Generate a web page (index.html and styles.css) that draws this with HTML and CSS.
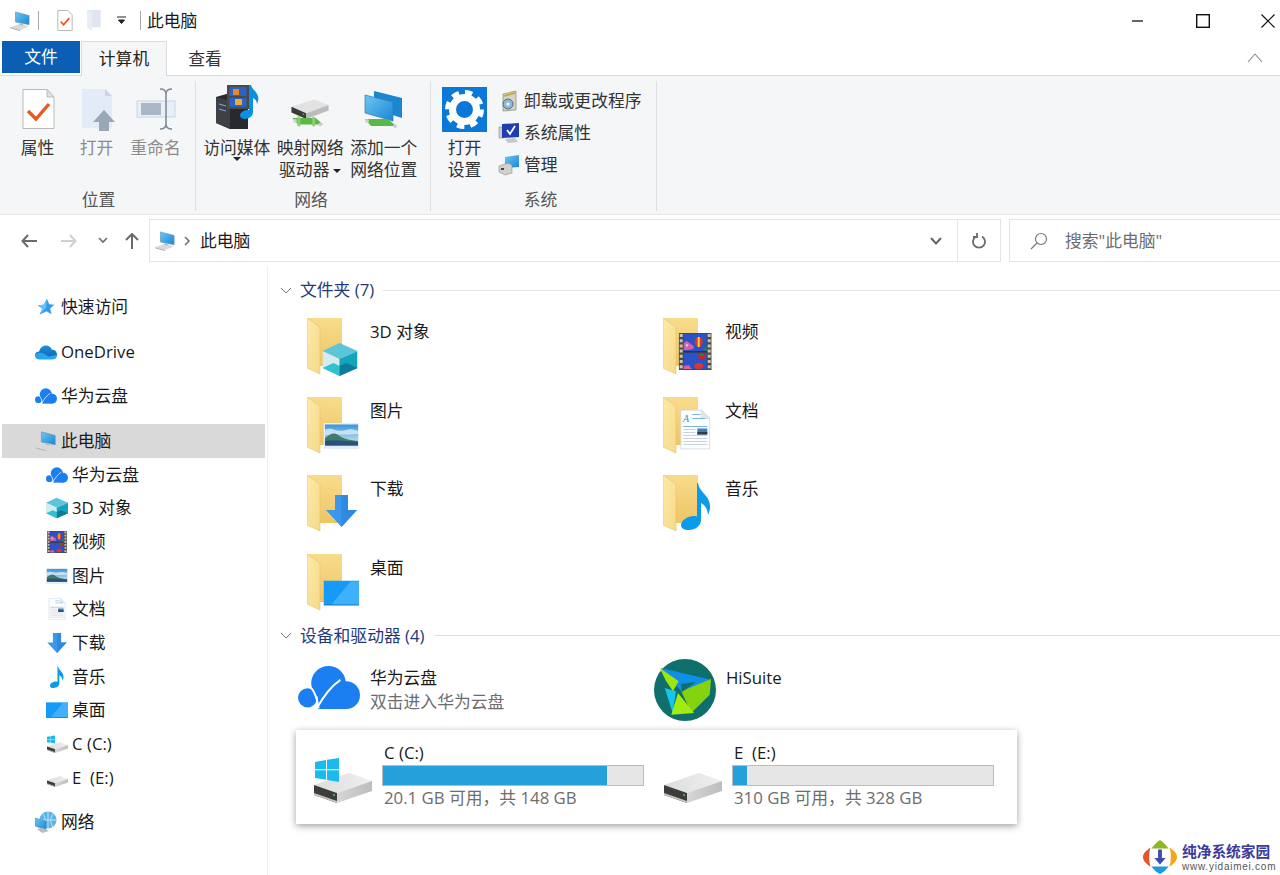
FILE: index.html
```html
<!DOCTYPE html>
<html lang="zh-CN">
<head>
<meta charset="utf-8">
<title>此电脑</title>
<link rel="stylesheet" href="styles.css">
</head>
<body>
<svg class="sprite" aria-hidden="true">
  <defs>
    <linearGradient id="gFolderBack" x1="0" y1="0" x2="0" y2="1"><stop offset="0" stop-color="#f8dc8c"/><stop offset="1" stop-color="#eec565"/></linearGradient>
    <linearGradient id="gFolderFlap" x1="0" y1="0" x2="1" y2="1"><stop offset="0" stop-color="#fdeaa8"/><stop offset="1" stop-color="#f7d98a"/></linearGradient>
    <linearGradient id="gScreen" x1="0" y1="0" x2="1" y2="1"><stop offset="0" stop-color="#6cc7f2"/><stop offset="1" stop-color="#1a86d6"/></linearGradient>
    <linearGradient id="gSky" x1="0" y1="0" x2="0" y2="1"><stop offset="0" stop-color="#3a95da"/><stop offset="1" stop-color="#d8ebf3"/></linearGradient>
    <linearGradient id="gDrive" x1="0" y1="0" x2="1" y2="0"><stop offset="0" stop-color="#dcdcdc"/><stop offset="1" stop-color="#f0f0f0"/></linearGradient>
    <linearGradient id="gDriveSide" x1="0" y1="0" x2="1" y2="0"><stop offset="0" stop-color="#d6d6d6"/><stop offset="1" stop-color="#bdbdbd"/></linearGradient>
    <linearGradient id="gOne" x1="0" y1="0" x2="0" y2="1"><stop offset="0" stop-color="#1f8fdc"/><stop offset="1" stop-color="#0a62b0"/></linearGradient>
  </defs>

  <symbol id="pc" viewBox="0 0 24 22">
    <polygon points="7,1 22,5 22,15 7,12" fill="url(#gScreen)" stroke="#5a93b8" stroke-width=".7"/>
    <polygon points="1,18 12,14 22,17 12,21" fill="#d7d9db"/>
    <polygon points="1,18 12,21 12,22 1,19" fill="#a8aaac"/>
    <polygon points="12,13 16,14 15,16 11,15" fill="#b9bcbe"/>
  </symbol>

  <symbol id="folder" viewBox="0 0 36 57">
    <polygon points="0,0 35,0 35,48 13,48 0,44" fill="url(#gFolderBack)"/>
    <polygon points="0,0 13,9 13,56 0,50" fill="url(#gFolderFlap)"/>
    <polygon points="0,0 13,9 13,56 0,50" fill="none" stroke="#e6c36a" stroke-width=".6"/>
  </symbol>

  <symbol id="cube" viewBox="0 0 35 33">
    <polygon points="17,0 35,8 17,16 0,8" fill="#5cc6d8"/>
    <polygon points="0,8 17,16 17,33 0,25" fill="#d2ecf0"/>
    <polygon points="35,8 35,25 17,33 17,16" fill="#16a3bc"/>
    <polygon points="0,25 11,20 17,23 17,33" fill="#2fc1cf"/>
    <polygon points="35,25 24,20 17,23 17,33" fill="#0b7c9e"/>
  </symbol>

  <symbol id="film" viewBox="0 0 33 37">
    <rect width="33" height="37" fill="#4a4a46"/>
    <path d="M2.500 1V36M30.500 1V36" stroke="#c9c3b0" stroke-width="3" stroke-dasharray="3 2.200"/>
    <rect x="5" y="1" width="23" height="35" fill="#2c52c6"/>
    <rect x="5" y="18" width="23" height="1.600" fill="#33332f"/>
    <ellipse cx="20" cy="9" rx="4" ry="5" fill="#e0342a"/>
    <rect x="19" y="4" width="2" height="10" fill="#f4d33a"/>
    <circle cx="23" cy="23" r="3.500" fill="#c8232a"/>
    <path d="M21 21h4v2h-4z" fill="#1c8c3a"/>
    <ellipse cx="20" cy="33" rx="4.500" ry="3" fill="#e0342a"/>
    <path d="M5 10l3-2 7 5v3l-6 1H5z" fill="#d85fa6"/>
    <path d="M7 11l3 1-2 2z" fill="#dfe8f0"/>
    <path d="M5 33l5-1 3 4H5z" fill="#d85fa6"/>
    <path d="M24 16l4-3v5z" fill="#1c8c3a"/>
  </symbol>

  <symbol id="picture" viewBox="0 0 36 26">
    <rect width="36" height="26" fill="#e4edf8"/>
    <rect x="1.500" y="1.500" width="33" height="21" fill="url(#gSky)"/>
    <path d="M1.500 7c4-2 7-1 10 0s8 1 11 0 8-1 12 1v3c-10 1-22 0-33 1z" fill="#eaf4f8" opacity=".7"/>
    <path d="M1.500 15c5-4 9-6 13-3s9 5 20 6v4.500H1.500z" fill="#41796a"/>
    <path d="M1.500 18c8-1 20 0 33 1v3.500h-33z" fill="#27507a"/>
  </symbol>

  <symbol id="doc" viewBox="0 0 30 40">
    <path d="M.5.500H21L29.500 9V39.500H.5z" fill="#fcfdfe" stroke="#cdd8e3"/>
    <path d="M21 .500V9H29.500z" fill="#dfe7ef" stroke="#cdd8e3" stroke-width=".6"/>
    <path d="M12 5h8M12 9h13M3 17h24" stroke="#7fb3dc" stroke-width="1"/>
    <path d="M3 20h12M3 23h12M3 26h24M3 29h24M3 32h24M3 35h24" stroke="#c9d2da" stroke-width="1"/>
    <rect x="17" y="19" width="10" height="6" fill="#3f7fb5"/>
    <rect x="17" y="22.500" width="10" height="2.500" fill="#2a3f52"/>
  </symbol>

  <symbol id="arrow" viewBox="0 0 31 32">
    <polygon points="9,0 22,0 22,15 31,15 15.500,32 0,15 9,15" fill="#3a97ea"/>
    <polygon points="15.500,0 22,0 22,15 31,15 15.500,32" fill="#2f8adf"/>
  </symbol>

  <symbol id="note" viewBox="0 0 30 47">
    <path d="M17 0c1 6 5 9 8 13 5 6 5 13 2 19-.5-6-3-10-7-12V37c0 6-6 10-12 10-5 0-8-2-8-5 0-5 7-9 13-9 1 0 2 0 3 .4V0z" fill="#0b9bec"/>
  </symbol>

  <symbol id="desk" viewBox="0 0 36 25">
    <rect width="36" height="25" fill="#159af7"/>
    <polygon points="7,25 27,1 36,1 36,25" fill="#3fb0fa"/>
    <rect y="24" width="36" height="1" fill="#0d6fbb"/>
  </symbol>

  <symbol id="drive" viewBox="0 0 58 30">
    <polygon points="0,12 35,0 58,8 23,20" fill="url(#gDrive)"/>
    <polygon points="0,12 23,20 23,30 0,22" fill="#3c3c3a"/>
    <polygon points="0,20 23,28 23,30 0,22" fill="#c4c4c4"/>
    <polygon points="23,20 58,8 58,18 23,30" fill="url(#gDriveSide)"/>
    <circle cx="20" cy="22" r="1" fill="#3fd05a"/>
  </symbol>

  <symbol id="win" viewBox="0 0 24 24">
    <polygon points="0,4 11,2 11,11.300 0,11.300" fill="#19bbee"/>
    <polygon points="12,1.800 24,0 24,11.300 12,11.300" fill="#19bbee"/>
    <polygon points="0,12.300 11,12.300 11,21.700 0,20" fill="#19bbee"/>
    <polygon points="12,12.300 24,12.300 24,24 12,22" fill="#19bbee"/>
  </symbol>

  <symbol id="hwcloud" viewBox="0 0 187 130">
    <circle cx="92" cy="52" r="52" fill="#1b7ff2"/>
    <circle cx="145" cy="88" r="42" fill="#1b7ff2"/>
    <circle cx="29" cy="96" r="29" fill="#1b7ff2"/>
    <rect x="60" y="70" width="85" height="60" fill="#1b7ff2"/>
    <path d="M54 132C74 96 98 62 128 42" fill="none" stroke="#fff" stroke-width="6"/>
    <path d="M28 58C50 68 58 100 62 128" fill="none" stroke="#fff" stroke-width="6"/>
  </symbol>

  <symbol id="onedrive" viewBox="0 0 24 16">
    <path d="M5 16C2 16 0 14 0 11.500S2 7.500 4.500 7.500C5.500 3.500 8.500 1 12 1c3 0 5.500 2 6.500 4.500 3-.3 5.500 2 5.500 5.300S22 16 19 16z" fill="url(#gOne)"/>
    <path d="M0 11.500C2 9 6 8 10 10l5 3 9-2c0 3-2 5-5 5H5c-3 0-5-2-5-4.500z" fill="#28a8ea"/>
  </symbol>

  <symbol id="star" viewBox="-3 -3 24 24">
    <polygon points="10,0 12.500,6 18,6.500 13.500,10.500 15,17 9.500,13.500 2,17.500 5,11 0,7 6.500,6.500" fill="#2d9cf0"/>
    <polygon points="10,0 6.500,6.500 0,7 5,11 2,17.500 9,10" fill="#62c4f6"/>
  </symbol>

  <symbol id="network" viewBox="0 0 22 22">
    <circle cx="13" cy="9" r="8.500" fill="#5cb3e6"/>
    <path d="M13 .5v17M5 9h16M8 3c3 4 3 9 0 13M18 3c-3 4-3 9 0 13" stroke="#d4eefa" stroke-width=".8" fill="none"/>
    <polygon points="0,7 11,10 11,19 0,15" fill="url(#gScreen)" stroke="#4b87ad" stroke-width=".5"/>
    <polygon points="2,18 8,17 14,20 7,22" fill="#b9bcc0"/>
  </symbol>

  <symbol id="gdrive-net" viewBox="0 0 44 42">
    <polygon points="2,16 26,8 42,14 18,23" fill="#e2e2e2"/>
    <polygon points="2,16 18,23 18,29 2,22" fill="#3a3a3a"/>
    <polygon points="18,23 42,14 42,20 18,29" fill="#bcbcbc"/>
    <circle cx="15" cy="24" r=".9" fill="#40d060"/>
    <polygon points="3,28 28,28 36,35 9,35" fill="#59b847"/>
    <path d="M10 26v11M26 27v10" stroke="#8ad26f" stroke-width="3"/>
    <circle cx="6" cy="31" r="2" fill="#d0d0d0"/>
    <circle cx="33" cy="35" r="2" fill="#d0d0d0"/>
  </symbol>

  <symbol id="netloc" viewBox="0 0 40 40">
    <polygon points="10,2 38,9 38,29 10,20" fill="#1a86d0"/>
    <polygon points="1,6 29,13 29,32 1,24" fill="url(#gScreen)" stroke="#2c7db5" stroke-width=".7"/>
    <polygon points="1,30 24,30 32,37 7,37" fill="#59b847"/>
    <circle cx="3" cy="32" r="2" fill="#cfcfcf"/>
    <circle cx="31" cy="37" r="2" fill="#cfcfcf"/>
  </symbol>
</svg>

<div class="window">
  <header class="titlebar">
    <svg class="qa-pc"><use href="#pc"/></svg>
    <span class="qa-sep"></span>
    <svg class="qa-check" viewBox="0 0 16 22">
      <path d="M.5.500H11L15.500 5V21.500H.5z" fill="#fff" stroke="#b5b5b5"/>
      <path d="M3.500 12l3 3.500 6-7" fill="none" stroke="#e9551f" stroke-width="1.800"/>
    </svg>
    <svg class="qa-folder" viewBox="0 0 15 22">
      <polygon points="0,0 14,0 14,18 5,18 0,16" fill="#dfe6f0"/>
      <polygon points="0,0 5,3 5,22 0,19" fill="#e9eef5"/>
    </svg>
    <svg class="qa-drop" viewBox="0 0 9 9"><path d="M0 1h9M1.500 4h6l-3 3.500z" stroke="#222" fill="#222" stroke-width="1"/></svg>
    <span class="qa-sep qa-sep-2"></span>
    <span class="title-text">此电脑</span>
    <div class="win-btns">
      <svg class="win-ic" viewBox="0 0 14 14"><path d="M1 7h11" stroke="#111" stroke-width="1.300"/></svg>
      <svg class="win-ic" viewBox="0 0 14 14"><rect x=".7" y=".7" width="12.600" height="12.600" fill="none" stroke="#111" stroke-width="1.400"/></svg>
      <svg class="win-ic" viewBox="0 0 14 14"><path d="M.5.500l13 13M13.500.500l-13 13" stroke="#111" stroke-width="1.200"/></svg>
    </div>
  </header>

  <nav class="tabs">
    <span class="tab tab-file">文件</span>
    <span class="tab tab-active">计算机</span>
    <span class="tab tab-plain">查看</span>
    <svg class="collapse" viewBox="0 0 16 10"><path d="M1 9l7-8 7 8" fill="none" stroke="#8a8a8a" stroke-width="1.100"/></svg>
  </nav>

  <section class="ribbon">
    <div class="group group-1">
      <div class="group-body">
        <div class="rbtn rbtn-1">
          <svg class="rb-ic" viewBox="0 0 44 44">
            <path d="M7 2.500H31L38 10V41.500H7z" fill="#fff" stroke="#b9b9b9"/>
            <path d="M31 2.500V10H38z" fill="#e4e4e4" stroke="#b9b9b9"/>
            <path d="M12 24l8 8 13-15" fill="none" stroke="#ea5a1e" stroke-width="3.400"/>
          </svg>
          <span class="rlabel">属性</span>
        </div>
        <div class="rbtn rbtn-1 is-off">
          <svg class="rb-ic" viewBox="0 0 44 44">
            <path d="M7 2H30L37 9V41H7z" fill="#e3ebf6"/>
            <path d="M30 2V9H37z" fill="#cfd6df"/>
            <path d="M29 23l11 12h-6v9H24v-9h-6z" fill="#9aa7b5"/>
          </svg>
          <span class="rlabel">打开</span>
        </div>
        <div class="rbtn rbtn-1 is-off">
          <svg class="rb-ic" viewBox="0 0 44 44">
            <rect x="3" y="14" width="38" height="16" fill="#e9eff6" stroke="#c8d4e2"/>
            <rect x="7" y="16" width="20" height="12" fill="#a9b7c6"/>
            <path d="M26 2c4 0 6 2 6 5v30c0 3 2 5 6 5M38 2c-4 0-6 2-6 5v30c0 3-2 5-6 5" fill="none" stroke="#7d8c9c" stroke-width="1.600"/>
          </svg>
          <span class="rlabel">重命名</span>
        </div>
      </div>
      <div class="group-label">位置</div>
    </div>

    <div class="group group-2">
      <div class="group-body">
        <div class="rbtn rbtn-2">
          <svg class="rb-ic rb-media" viewBox="0 0 46 44">
            <polygon points="2,12 16,8 34,14 34,44 16,44 2,38" fill="#27292c"/>
            <polygon points="2,12 16,16 16,44 2,38" fill="#3d4146"/>
            <path d="M5 19l7 2M5 24l7 2" stroke="#7aa6cc" stroke-width="1.200"/>
            <rect x="13" y="0" width="22" height="24" fill="#4b4b46"/>
            <rect x="15.500" y="2" width="17" height="9" fill="#2c62c6"/>
            <rect x="15.500" y="13" width="17" height="9" fill="#2c62c6"/>
            <rect x="19" y="4" width="6" height="6" fill="#e08a2a"/>
            <rect x="21" y="14" width="7" height="6" fill="#e8b02a"/>
            <path d="M37 0c1 4 4 5 6 9 2 3 1.500 7 0 10 0-3-2-5-4-6v14c0 4-4 7-8 7-3 0-5-1.500-5-3.500 0-4 6-6 9-5.500V0z" fill="#0b8fe0"/>
          </svg>
          <span class="rlabel">访问媒体</span>
          <span class="caret caret-block"></span>
        </div>
        <div class="rbtn rbtn-2">
          <svg class="rb-ic" viewBox="0 0 44 44"><use href="#gdrive-net" x="0" y="5" width="44" height="39"/></svg>
          <span class="rlabel">映射网络</span>
          <span class="rlabel">驱动器<span class="caret caret-inline"></span></span>
        </div>
        <div class="rbtn rbtn-2">
          <svg class="rb-ic" viewBox="0 0 44 44"><use href="#netloc" x="2" y="2" width="40" height="40"/></svg>
          <span class="rlabel">添加一个</span>
          <span class="rlabel">网络位置</span>
        </div>
      </div>
      <div class="group-label">网络</div>
    </div>

    <div class="group group-3">
      <div class="group-body group-body-3">
        <div class="rbtn rbtn-3">
          <svg class="rb-gear" viewBox="0 0 45 45">
            <rect width="45" height="45" fill="#0a78d7"/>
            <circle cx="22.500" cy="22.500" r="12" fill="none" stroke="#fff" stroke-width="7"/>
            <circle cx="22.500" cy="22.500" r="17" fill="none" stroke="#fff" stroke-width="5" stroke-dasharray="7.300 6.050"/>
          </svg>
          <span class="rlabel rlabel-gear">打开</span>
          <span class="rlabel">设置</span>
        </div>
        <ul class="rlist">
          <li class="ritem">
            <svg class="ri-ic" viewBox="0 0 22 22">
              <path d="M5 4l13-3v19l-13 1z" fill="#d6d2c4" stroke="#8b8778" stroke-width=".7"/>
              <circle cx="10" cy="14" r="5" fill="#8fb8d6" stroke="#4c6d87"/>
              <circle cx="10" cy="14" r="1.500" fill="#fff"/>
              <path d="M6 6l11-3" stroke="#c9a227" stroke-width="1.500"/>
            </svg>
            <span>卸载或更改程序</span>
          </li>
          <li class="ritem">
            <svg class="ri-ic" viewBox="0 0 22 22">
              <rect x="1" y="5" width="4" height="11" fill="#c9cdd2" stroke="#8a8f95" stroke-width=".6"/>
              <polygon points="4,2 21,1 21,15 4,16" fill="#1f3fb0"/>
              <path d="M9 8l3 4 5-8" fill="none" stroke="#fff" stroke-width="1.800"/>
              <polygon points="7,17 17,16 20,20 10,21" fill="#c4c7cb"/>
            </svg>
            <span>系统属性</span>
          </li>
          <li class="ritem">
            <svg class="ri-ic" viewBox="0 0 22 22">
              <polygon points="7,3 21,1 21,13 7,14" fill="url(#gScreen)"/>
              <polygon points="1,12 10,9 14,11 14,19 7,21 1,18" fill="#d0d0cd" stroke="#807f7b" stroke-width=".5"/>
              <rect x="3" y="14" width="3" height="2" fill="#444"/>
            </svg>
            <span>管理</span>
          </li>
        </ul>
      </div>
      <div class="group-label">系统</div>
    </div>
  </section>

  <div class="toolbar">
    <svg class="tb-back" viewBox="0 0 16 14"><path d="M7 1L1.500 7 7 13M2 7h14" fill="none" stroke="#6b6b6b" stroke-width="2"/></svg>
    <svg class="tb-fwd" viewBox="0 0 16 14"><path d="M9 1l5.500 6L9 13M14 7H0" fill="none" stroke="#cfcfcf" stroke-width="2"/></svg>
    <svg class="tb-recent" viewBox="0 0 10 7"><path d="M1 1l4 4 4-4" fill="none" stroke="#6b6b6b" stroke-width="1.600"/></svg>
    <svg class="tb-up" viewBox="0 0 14 16"><path d="M1 7l6-6 6 6M7 2v14" fill="none" stroke="#6b6b6b" stroke-width="2"/></svg>
    <div class="addr">
      <svg class="addr-pc"><use href="#pc"/></svg>
      <svg class="addr-gt" viewBox="0 0 6 10"><path d="M1 1l4 4-4 4" fill="none" stroke="#6b6b6b" stroke-width="1.500"/></svg>
      <span class="addr-text">此电脑</span>
      <svg class="addr-down" viewBox="0 0 12 8"><path d="M1 1l5 5.500L11 1" fill="none" stroke="#666" stroke-width="2"/></svg>
      <span class="addr-refresh">
        <svg class="refresh-ic" viewBox="0 0 14 18"><path d="M4 4.500a6 6 0 1 0 6 0M5 1v4H1" fill="none" stroke="#6b6b6b" stroke-width="1.800"/></svg>
      </span>
    </div>
    <div class="search">
      <svg class="search-ic" viewBox="0 0 18 18"><circle cx="11" cy="7" r="5.500" fill="none" stroke="#777" stroke-width="1.200"/><path d="M7 11l-6 6" stroke="#777" stroke-width="1.200"/></svg>
      <span>搜索"此电脑"</span>
    </div>
  </div>

  <main class="main">
    <aside class="sidebar">
      <div class="nav-row top"><svg class="ic"><use href="#star"/></svg><span>快速访问</span></div>
      <div class="nav-row top"><svg class="ic"><use href="#onedrive"/></svg><span>OneDrive</span></div>
      <div class="nav-row top"><svg class="ic"><use href="#hwcloud"/></svg><span>华为云盘</span></div>
      <div class="nav-row top selected"><svg class="ic"><use href="#pc"/></svg><span>此电脑</span></div>
      <div class="nav-row child"><svg class="ic"><use href="#hwcloud"/></svg><span>华为云盘</span></div>
      <div class="nav-row child"><svg class="ic"><use href="#cube"/></svg><span>3D 对象</span></div>
      <div class="nav-row child"><svg class="ic"><use href="#film"/></svg><span>视频</span></div>
      <div class="nav-row child"><svg class="ic"><use href="#picture"/></svg><span>图片</span></div>
      <div class="nav-row child"><svg class="ic"><use href="#doc"/></svg><span>文档</span></div>
      <div class="nav-row child"><svg class="ic ic-s"><use href="#arrow"/></svg><span>下载</span></div>
      <div class="nav-row child"><svg class="ic"><use href="#note"/></svg><span>音乐</span></div>
      <div class="nav-row child"><svg class="ic"><use href="#desk"/></svg><span>桌面</span></div>
      <div class="nav-row child">
        <svg class="ic" viewBox="0 0 22 22"><use href="#drive" x="1" y="9" width="21" height="11"/><use href="#win" x="1" y="2" width="8" height="9"/></svg>
        <span>C (C:)</span>
      </div>
      <div class="nav-row child">
        <svg class="ic" viewBox="0 0 22 22"><use href="#drive" x="1" y="9" width="21" height="11"/></svg>
        <span>E &nbsp;(E:)</span>
      </div>
      <div class="nav-row top"><svg class="ic"><use href="#network"/></svg><span>网络</span></div>
    </aside>

    <div class="content">
      <div class="sec-head">
        <svg class="sec-chev" viewBox="0 0 12 7"><path d="M1 1l5 5 5-5" fill="none" stroke="#7a7a7a" stroke-width="1"/></svg>
        <span class="sec-title">文件夹 (7)</span>
        <span class="sec-rule"></span>
      </div>
      <div class="folders">
        <div class="item">
          <svg class="folder" viewBox="0 0 52 58"><use href="#folder" width="36" height="57"/><use href="#cube" x="15.500" y="25" width="35" height="33"/></svg>
          <span class="item-name">3D 对象</span>
        </div>
        <div class="item">
          <svg class="folder" viewBox="0 0 52 58"><use href="#folder" width="36" height="57"/><use href="#film" x="15.700" y="15" width="33" height="37"/></svg>
          <span class="item-name">视频</span>
        </div>
        <div class="item">
          <svg class="folder" viewBox="0 0 52 58"><use href="#folder" width="36" height="57"/><use href="#picture" x="16.500" y="26" width="36" height="26"/></svg>
          <span class="item-name">图片</span>
        </div>
        <div class="item">
          <svg class="folder" viewBox="0 0 52 58"><use href="#folder" width="36" height="57"/><use href="#doc" x="17.300" y="12.500" width="30" height="40"/><text x="20" y="25" class="doc-a">A</text></svg>
          <span class="item-name">文档</span>
        </div>
        <div class="item">
          <svg class="folder" viewBox="0 0 52 58"><use href="#folder" width="36" height="57"/><use href="#arrow" x="19" y="20" width="31" height="32"/></svg>
          <span class="item-name">下载</span>
        </div>
        <div class="item">
          <svg class="folder" viewBox="0 0 52 58"><use href="#folder" width="36" height="57"/><use href="#note" x="18" y="8" width="30" height="47"/></svg>
          <span class="item-name">音乐</span>
        </div>
        <div class="item">
          <svg class="folder" viewBox="0 0 52 58"><use href="#folder" width="36" height="57"/><use href="#desk" x="16.500" y="26.500" width="36" height="25"/></svg>
          <span class="item-name">桌面</span>
        </div>
      </div>

      <div class="sec-head">
        <svg class="sec-chev" viewBox="0 0 12 7"><path d="M1 1l5 5 5-5" fill="none" stroke="#7a7a7a" stroke-width="1"/></svg>
        <span class="sec-title">设备和驱动器 (4)</span>
        <span class="sec-rule"></span>
      </div>
      <div class="devices">
        <div class="device">
          <svg class="dev-cloud"><use href="#hwcloud"/></svg>
          <div class="dev-text">
            <div class="dev-name">华为云盘</div>
            <div class="dev-sub">双击进入华为云盘</div>
          </div>
        </div>
        <div class="device">
          <svg class="dev-hi" viewBox="0 0 62 62">
            <circle cx="31" cy="31" r="31" fill="#0f6f6b"/>
            <polygon points="6.700,9 57,20.700 27.300,32.300" fill="#0f8fe8"/>
            <polygon points="57,20 55.700,35.700 37.300,54 27.300,32.300" fill="#85d20e"/>
            <polygon points="27,25 42,23 28,33" fill="#0f6f6b"/>
            <polygon points="10.700,29 22,32.300 18.700,54" fill="#14c5ef"/>
            <polygon points="5.700,9 24.700,22.300 19,32.300 12,22" fill="#9fe60c"/>
            <polygon points="24,34 40,54 17.300,55.700" fill="#a3ec12"/>
          </svg>
          <div class="dev-text"><div class="dev-name">HiSuite</div></div>
        </div>
      </div>

      <div class="drives">
        <div class="drive">
          <svg class="drive-ic" viewBox="0 0 59 45"><use href="#drive" x="0" y="15" width="58" height="30"/><use href="#win" x="1" y="0" width="24" height="24"/></svg>
          <div class="drive-info">
            <div class="drive-name">C (C:)</div>
            <div class="bar"><div class="bar-fill" style="width:86%"></div></div>
            <div class="drive-sub">20.1 GB 可用，共 148 GB</div>
          </div>
        </div>
        <div class="drive">
          <svg class="drive-ic" viewBox="0 0 59 45"><use href="#drive" x="0" y="15" width="58" height="30"/></svg>
          <div class="drive-info">
            <div class="drive-name">E &nbsp;(E:)</div>
            <div class="bar"><div class="bar-fill" style="width:5.500%"></div></div>
            <div class="drive-sub">310 GB 可用，共 328 GB</div>
          </div>
        </div>
      </div>
    </div>
  </main>

  <div class="watermark">
    <svg class="wm-logo" viewBox="0 0 36 36">
      <path d="M18 0c4 3 7 6 9 9H9c2-3 5-6 9-9z" fill="#8cb820"/>
      <path d="M8 8c-4 3-8 6-8 10s4 8 8 10c-1-3-1.500-6-1.500-10S7 11 8 8z" fill="#e8532b"/>
      <path d="M28 8c4 3 8 6 8 10s-4 8-8 10c1-3 1.500-6 1.500-10S29 11 28 8z" fill="#f5a516"/>
      <path d="M9 28h18c-2 3-5 6-9 8-4-2-7-5-9-8z" fill="#1c9be0"/>
      <path d="M16 10h4v9h4l-6 7-6-7h4z" fill="#3a4bb0"/>
    </svg>
    <div class="wm-text">
      <div class="wm-cn">纯净系统家园</div>
      <div class="wm-en">www.yidaimei.com</div>
    </div>
  </div>
</div>
</body>
</html>
```

FILE: styles.css
```css
* { box-sizing: border-box; }

html, body {
  margin: 0;
  padding: 0;
  background: #fff;
}

body {
  width: 1280px;
  height: 875px;
  overflow: hidden;
  font-family: "Open Sans", "Noto Sans CJK SC", sans-serif;
  font-size: 16.8px;
  line-height: 22px;
  color: #1a1a1a;
}

svg { display: block; flex: none; }

.sprite { position: absolute; width: 0; height: 0; }

.window { position: relative; width: 1280px; height: 875px; overflow: hidden; }

/* title bar */
.titlebar { display: flex; align-items: center; height: 41px; padding-left: 9px; }
.qa-pc { width: 22px; height: 20px; }
.qa-sep { width: 1px; height: 19px; background: #a8a8a8; margin-left: 7px; }
.qa-check { width: 16px; height: 21px; margin-left: 18px; }
.qa-folder { width: 15px; height: 21px; margin-left: 14px; }
.qa-drop { width: 9px; height: 9px; margin-left: 15px; }
.qa-sep-2 { margin-left: 14px; }
.title-text { margin-left: 6px; }
.win-btns { display: flex; gap: 51px; margin-left: auto; padding-right: 5px; }
.win-ic { width: 14px; height: 14px; }

/* tabs */
.tabs { display: flex; align-items: flex-start; height: 34px; padding-left: 2px; position: relative; z-index: 1; }
.tab { display: flex; align-items: center; justify-content: center; }
.tab-file { width: 78px; height: 32px; background: #0a5fb4; color: #fff; }
.tab-active {
  width: 86px; height: 35px; margin-left: 1px;
  background: #f5f6f7;
  border: 1px solid #dadbdc; border-bottom: 0;
  color: #222;
}
.tab-plain { width: 76px; height: 35px; color: #333; }
.collapse { width: 16px; height: 10px; margin: 12px 17px 0 auto; }

/* ribbon */
.ribbon {
  display: flex;
  height: 140px;
  padding: 5px 0;
  background: #f5f6f7;
  border-top: 1px solid #dadbdc;
  border-bottom: 1px solid #e6e7e8;
}
.group { display: flex; flex-direction: column; border-right: 1px solid #dfe0e1; height: 130px; }
.group-1 { width: 196px; padding-left: 8px; }
.group-2 { width: 235px; padding-left: 4px; }
.group-3 { width: 226px; padding-left: 11px; }
.group-body { display: flex; flex: 1; padding-top: 6px; }
.group-label { height: 22px; text-align: center; color: #555; }
.group-1 .group-label { padding-right: 6px; }
.group-2 .group-label { padding-right: 8px; }
.group-3 .group-label { padding-right: 17px; }

.rbtn { display: flex; flex-direction: column; align-items: center; }
.rbtn-1 { width: 59px; }
.rbtn-2 { width: 73.5px; }
.rbtn-3 { width: 45px; }
.rb-ic { width: 44px; height: 44px; margin-bottom: 6px; }
.rb-media { width: 46px; margin-top: -2px; margin-bottom: 8px; }
.rb-gear { width: 45px; height: 45px; }
.rlabel { display: block; white-space: nowrap; color: #333; }
.rlabel-gear { margin-top: 5px; }
.is-off .rlabel { color: #8c8c8c; }
.caret { display: block; width: 0; height: 0; border-left: 4px solid transparent; border-right: 4px solid transparent; border-top: 4px solid #222; }
.caret-block { margin-top: -2px; }
.caret-inline { display: inline-block; margin-left: 4px; vertical-align: 3px; }

.rlist { list-style: none; margin: -2px 0 0 11px; padding: 0; }
.ritem { display: flex; align-items: center; gap: 4px; height: 32px; color: #333; white-space: nowrap; }
.ri-ic { width: 22px; height: 22px; }

/* toolbar */
.toolbar { display: flex; align-items: flex-start; height: 51px; padding: 4px 0 0 21px; }
.tb-back, .tb-fwd { width: 16px; height: 14px; margin-top: 15px; }
.tb-fwd { margin-left: 24px; }
.tb-recent { width: 10px; height: 7px; margin: 18px 0 0 21px; }
.tb-up { width: 14px; height: 16px; margin: 14px 0 0 17px; }
.addr {
  display: flex; align-items: center;
  width: 852px; height: 43px; margin-left: 10px;
  padding-left: 4px;
  border: 1px solid #e5e5e5;
}
.addr-pc { width: 22px; height: 20px; }
.addr-gt { width: 6px; height: 10px; margin-left: 8px; }
.addr-text { margin-left: 10px; }
.addr-down { width: 12px; height: 8px; margin-left: auto; }
.addr-refresh { display: flex; align-items: center; justify-content: center; width: 43px; height: 41px; margin-left: 15px; border-left: 1px solid #e5e5e5; }
.refresh-ic { width: 14px; height: 18px; }
.search {
  display: flex; align-items: center; flex: 1;
  height: 43px; margin-left: 8px; padding-left: 20px;
  border: 1px solid #e5e5e5; border-right: 0;
  color: #6d6d6d;
}
.search-ic { width: 18px; height: 18px; margin-right: 17px; }

/* main */
.main { display: flex; height: 609px; }
.sidebar { width: 268px; flex: none; padding-top: 24px; border-right: 1px solid #efefef; }
.nav-row { display: flex; align-items: center; gap: 4px; height: 33.7px; }
.nav-row.top { padding-left: 35px; margin-bottom: 11px; }
.nav-row.top.selected { margin: 0 2px 0 2px; padding-left: 33px; background: #d9d9d9; }
.nav-row.child { padding-left: 46px; }
.nav-row.child:nth-last-child(2) { margin-bottom: 11px; }
.ic { width: 22px; height: 22px; }
.ic-s { padding: 1px; }

.content { flex: 1; padding-top: 12px; }
.sec-head { display: flex; align-items: center; height: 24px; padding-left: 12px; }
.sec-chev { width: 12px; height: 7px; }
.sec-title { margin-left: 8px; color: #1f3a7a; white-space: nowrap; }
.sec-rule { flex: 1; height: 1px; margin-left: 9px; background: #e2e2e2; }

.folders {
  display: grid;
  grid-template-columns: 356px 356px;
  grid-template-rows: 78.5px 78.5px 78.5px 70px;
  margin: 16px 0 0 39px;
}
.item { display: flex; gap: 11px; }
.folder { width: 52px; height: 58px; }
.item:nth-child(even) { gap: 10px; }
.item-name { padding-top: 3px; }

.devices { display: grid; grid-template-columns: 356px 356px; height: 71px; margin: 11px 0 0 30px; }
.device { display: flex; gap: 10px; }
.dev-cloud { width: 62px; height: 45px; margin-top: 6px; }
.dev-hi { width: 62px; height: 62px; }
.dev-text { padding-top: 8px; }
.dev-name { height: 24px; }
.dev-sub { color: #6d6d6d; }

.drives {
  display: grid;
  grid-template-columns: 350px 1fr;
  width: 721px; height: 94px;
  margin-left: 28px;
  padding: 12px 0 0 18px;
  background: #fff;
  box-shadow: 0 2px 7px rgba(0, 0, 0, .38);
}
.drive { display: flex; gap: 9px; }
.drive-ic { width: 59px; height: 45px; margin-top: 16px; }
.drive-info { width: 262px; }
.drive-name { padding-left: 2px; }
.bar { height: 21px; margin-top: 1px; background: #e6e6e6; border: 1px solid #bcbcbc; }
.bar-fill { height: 100%; margin: 0; background: #26a0da; }
.drive-sub { padding: 1px 0 0 2px; color: #6d6d6d; }

.doc-a { font: italic 10px "Liberation Serif", serif; fill: #3f8fd0; }

/* watermark overlay */
.watermark { position: absolute; right: 10px; bottom: 1px; display: flex; gap: 5px; align-items: center; }
.wm-logo { width: 34px; height: 34px; }
.wm-text { width: 88px; }
.wm-cn { font-size: 14.7px; line-height: 20px; font-weight: 700; color: #3d3a9c; white-space: nowrap; }
.wm-en { font-family: "Liberation Sans", sans-serif; font-size: 10px; line-height: 12px; letter-spacing: .75px; color: #555; white-space: nowrap; }
```
